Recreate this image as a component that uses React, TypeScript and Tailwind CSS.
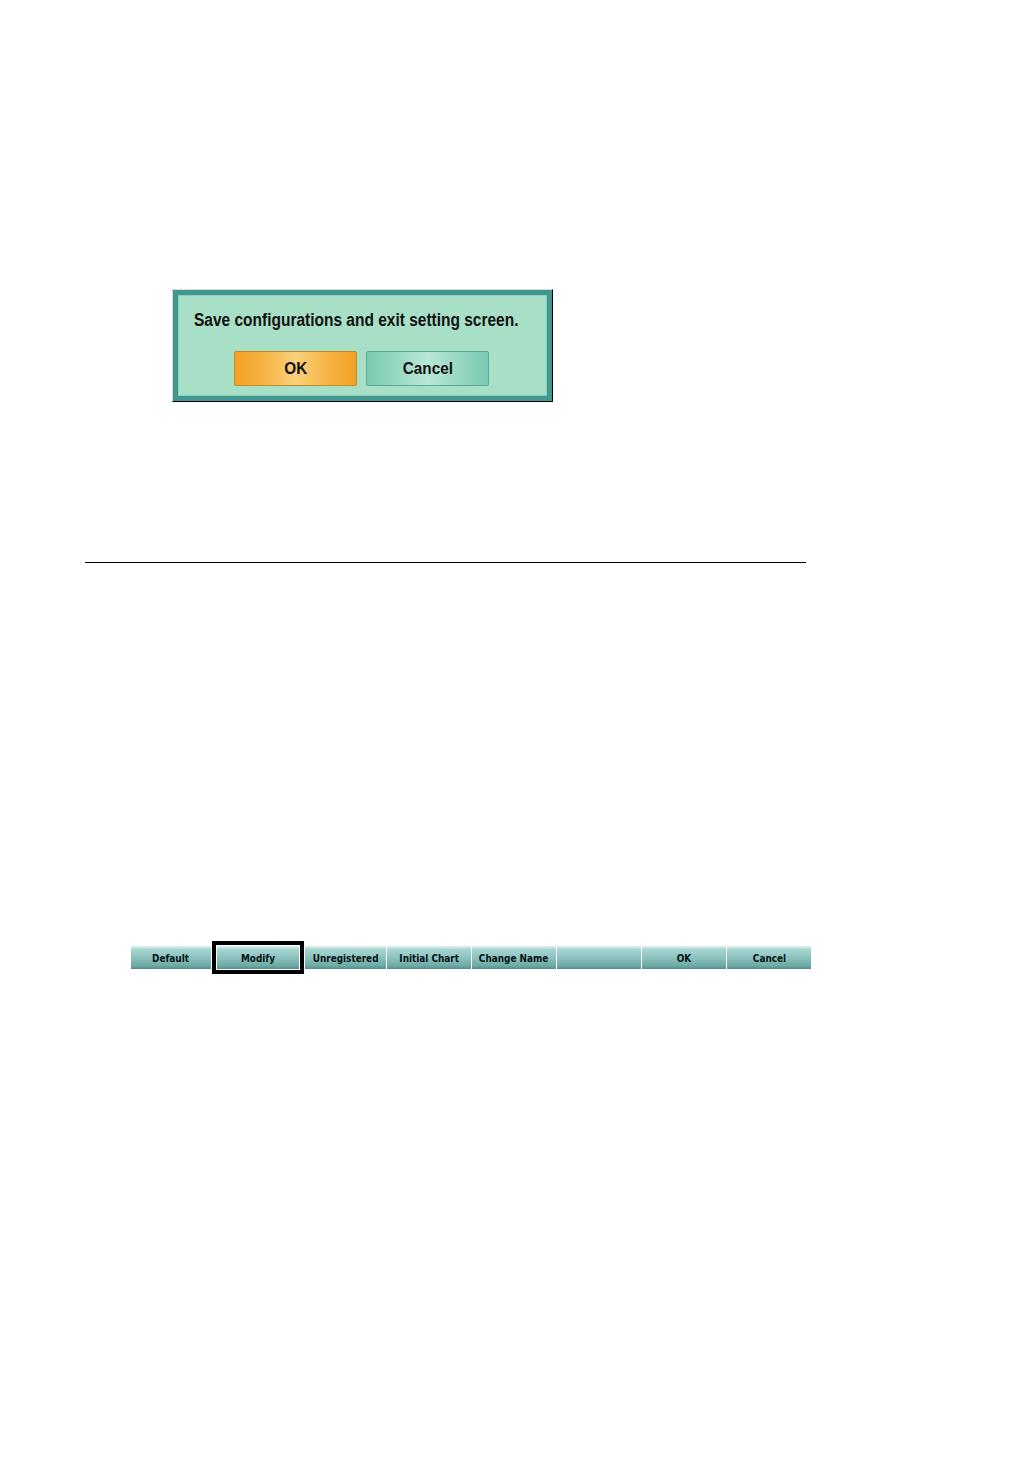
import React from "react";

const barButtons = [
  { label: "Default", w: "w-[80px]" },
  { label: "Modify", w: "w-[82px]", selected: true },
  { label: "Unregistered", w: "w-[81px]" },
  { label: "Initial Chart", w: "w-[84px]" },
  { label: "Change Name", w: "w-[84px]" },
  { label: "", w: "w-[84px]" },
  { label: "OK", w: "w-[84px]" },
  { label: "Cancel", w: "w-[84px]" },
];

const narrow = { fontFamily: '"Liberation Sans", Arial, sans-serif' };

const BarButton = ({ label, w }: { label: string; w: string }) => (
  <div
    className={`${w} h-[23px] flex items-center justify-center bg-[linear-gradient(to_bottom,#e2f3f1_0%,#a9d6d2_14%,#8cc3be_50%,#6ea9a5_86%,#4f8c89_100%)] text-[11px] font-bold text-[#061212] leading-none`}
    style={{ fontFamily: '"DejaVu Sans Condensed", "Liberation Sans", sans-serif' }}
  >
    <span className="inline-block scale-x-[0.9] mt-[1px]">{label}</span>
  </div>
);

const App = () => {
  return (
    <div className="w-[1032px] h-[1458px] bg-white flex flex-col pt-[289px]">
      {/* confirm dialog */}
      <div className="ml-[172px] w-[381px] h-[113px] border border-t-[#d8d8d8] border-l-[#d8d8d8] border-r-black border-b-black">
        <div className="w-full h-full border-[5px] border-[#3f978f]">
          <div className="w-full h-full bg-[#a8dfc7] border border-[#8ccfb8] flex flex-col">
            <div className="mt-[16px] pl-[15px] flex leading-none">
              <div
                className="origin-left text-[17.5px] font-bold text-[#111] leading-none whitespace-nowrap scale-x-[0.885]"
                style={narrow}
              >
                Save configurations and exit setting screen.
              </div>
            </div>
            <div className="mt-[21px] ml-[55px] flex gap-[9px]">
              <button
                className="w-[123px] h-[35px] rounded-[2px] border border-[#c98a22] bg-[linear-gradient(to_right,#f3a024,#f6b446_25%,#f9d17c_50%,#f6b446_75%,#f3a024)] text-[17px] font-bold text-[#111] leading-none"
                style={narrow}
              >
                <span className="inline-block scale-x-[0.9]">OK</span>
              </button>
              <button
                className="w-[123px] h-[35px] rounded-[2px] border border-[#5ea89a] bg-[linear-gradient(to_right,#79c9b2,#98d8c3_25%,#b8e8d6_50%,#98d8c3_75%,#79c9b2)] text-[17px] font-bold text-[#111] leading-none"
                style={narrow}
              >
                <span className="inline-block scale-x-[0.9]">Cancel</span>
              </button>
            </div>
          </div>
        </div>
      </div>

      {/* divider */}
      <div className="ml-[85px] mt-[160px] w-[721px] h-px bg-black" />

      {/* bottom button bar */}
      <div className="ml-[131px] mt-[378px] flex items-center gap-[1px] h-[33px]">
        {barButtons.map((b, i) =>
          b.selected ? (
            <div key={i} className="border-[4px] border-black p-[1px] bg-white">
              <BarButton label={b.label} w={b.w} />
            </div>
          ) : (
            <BarButton key={i} label={b.label} w={b.w} />
          )
        )}
      </div>
    </div>
  );
};

export default App;
